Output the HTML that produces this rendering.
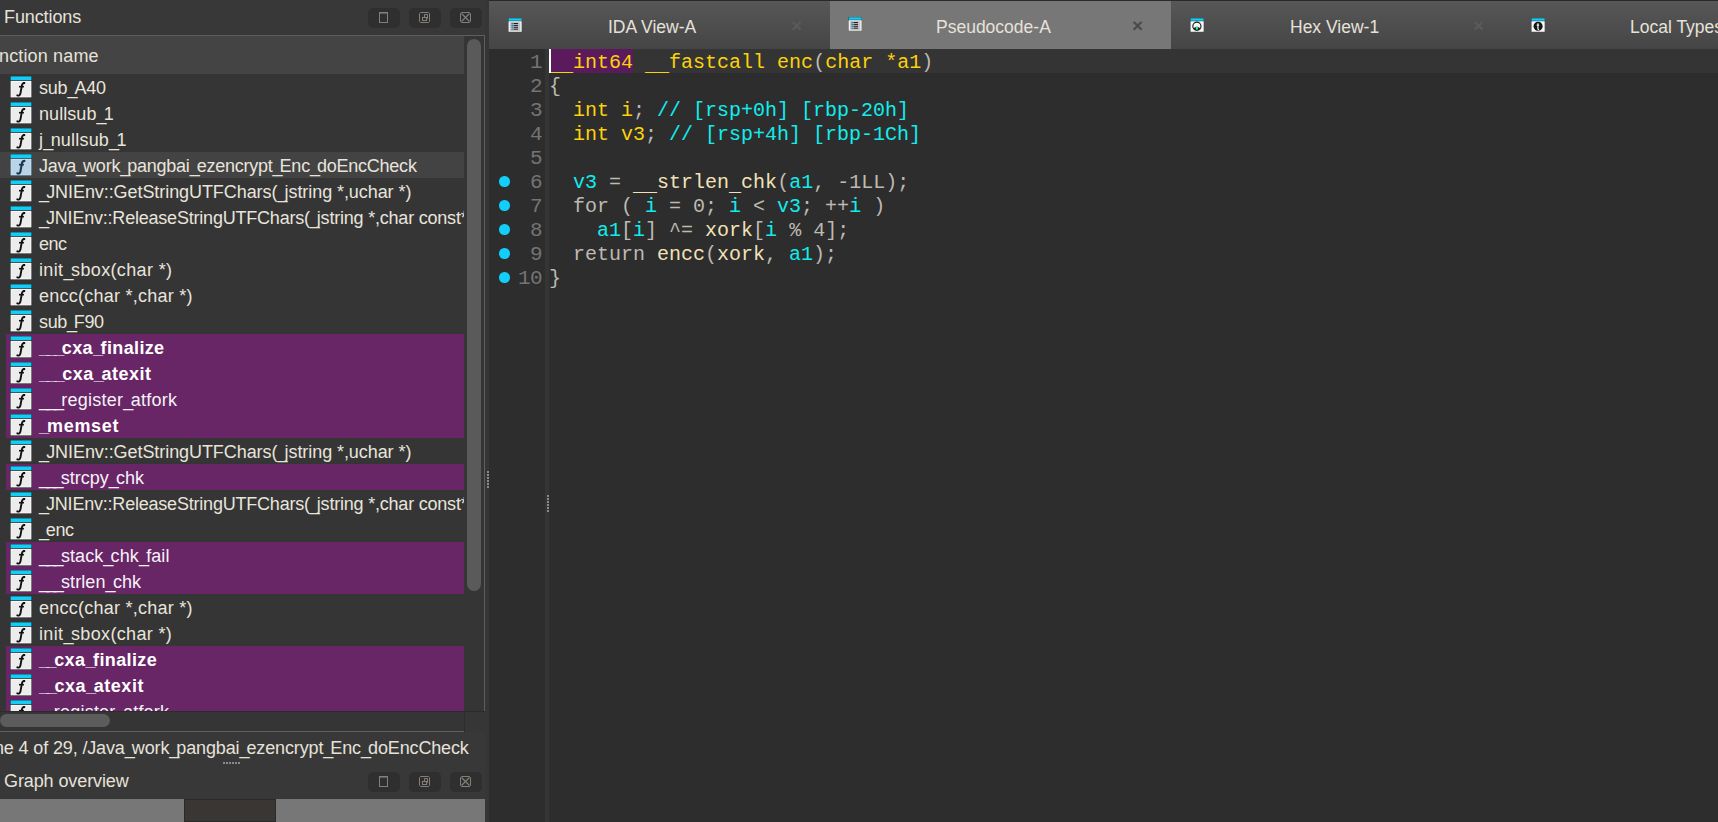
<!DOCTYPE html>
<html><head><meta charset="utf-8">
<style>
*{margin:0;padding:0;box-sizing:border-box}
html,body{width:1718px;height:822px;overflow:hidden;background:#2b2b2b;font-family:"Liberation Sans",sans-serif;color:#e8e4dc;position:relative}
.abs{position:absolute}
svg{display:block}
#left{position:absolute;left:0;top:0;width:489px;height:822px;background:#383838}
.title{position:absolute;left:4px;font-size:18px;letter-spacing:-0.1px;margin-top:1px;color:#e6e2da;white-space:nowrap}
.btn{position:absolute;width:32px;height:20px;border-radius:5px;background:#2f2f2f}
#list{position:absolute;left:0;top:35px;width:485px;height:697px;border-top:1px solid #5e5e5e;background:#353535;overflow:hidden}
#hdr{position:absolute;left:0;top:0;width:464px;height:38px;background:#444}
#hdr span{position:absolute;left:-1px;top:10px;font-size:18px;letter-spacing:0.15px;white-space:nowrap;color:#e6e2da}
#rows{position:absolute;left:0;top:38px;width:464px;height:637px;overflow:hidden;background:#353535}
.row{position:absolute;left:0;width:464px;height:26px;white-space:nowrap;font-size:18px}
.row.sel{background:#434343}
.row.pur{background:#682667;color:#f6f2f8}
.ic{position:absolute;left:10px;top:2px;width:22px;height:22px}
.tx{position:absolute;left:39px;top:4px}
.row.pur::before{content:"";position:absolute;left:0;top:0;width:6px;height:26px;background:#353535}
.tx.b{font-weight:bold;color:#fff}
#vscroll{position:absolute;left:464px;top:0;width:20px;height:675px;background:#353535}
#thumb{position:absolute;left:3px;top:3px;width:14px;height:552px;border-radius:7px;background:#5a5a5a}
#hscroll{position:absolute;left:0;top:675px;width:464px;height:21px;background:#353535;border-top:1px solid #2c2c2c;border-bottom:1px solid #5e5e5e}
#hthumb{position:absolute;left:0;top:2px;width:110px;height:13px;border-radius:6.5px;background:#5c5c5c}
#corner{position:absolute;left:464px;top:675px;width:21px;height:21px;background:#363636;border-top:1px solid #2c2c2c;border-left:1px solid #2c2c2c}
#status{position:absolute;left:-6px;top:738px;font-size:18px;--ls:-0.14px;letter-spacing:var(--ls);white-space:nowrap;color:#e6e2da}
#graph{position:absolute;left:0;top:799px;width:485px;height:23px;background:#777}
#graphrect{position:absolute;left:184px;top:0;width:92px;height:23px;background:#3a3634;border:1px solid #2a2a2a}
.dots6{position:absolute;width:18px;height:2px;background:repeating-linear-gradient(90deg,#8a8a8a 0 2px,transparent 2px 3px)}
.vdots{position:absolute;width:2px;height:17px;background:repeating-linear-gradient(180deg,#8a8a8a 0 2px,transparent 2px 3px)}
#lsplit{position:absolute;left:485px;top:0;width:4px;height:822px;background:#363636}
/* right */
#right{position:absolute;left:489px;top:0;width:1229px;height:822px;background:#2d2d2d}
#tabs{position:absolute;left:489px;top:0;width:1229px;height:49px;background:linear-gradient(#575757,#454545);border-top:1px solid #2a2a2a;overflow:hidden}
.tab{position:absolute;top:0;height:48px;white-space:nowrap}
.tab .tt{position:absolute;top:16px;font-size:17.5px;color:#e6e2da}
.tab .x{position:absolute;top:14px;font-size:19px;font-weight:bold;color:#5a5a5a}
.tab.act{background:#777}
.tab.act .x{color:#4a4a4a}
#gut{position:absolute;left:489px;top:49px;width:56px;height:773px;background:#2d2d2d}
#gutline{position:absolute;left:545px;top:49px;width:4px;height:773px;background:#353535}
#curline{position:absolute;left:549px;top:49px;width:1169px;height:24px;background:#343434}
.cl{position:absolute;left:549px;margin-top:2px;height:24px;font-family:"Liberation Mono",monospace;font-size:20px;line-height:24px;white-space:pre}
.ln{position:absolute;left:489px;width:53px;margin-top:2px;text-align:right;font-family:"Liberation Mono",monospace;font-size:21px;letter-spacing:-0.6px;line-height:24px;color:#747474}
.dot{position:absolute;left:499px;width:10.5px;height:10.5px;border-radius:50%;background:#12cefa}
.y{color:#fcd20a}
.c{color:#12ecec}
.g{color:#bdbab2}
.f{color:#f2e2b8}
.hl{}
#hlbox{position:absolute;left:549px;top:49px;width:84px;height:24px;background:#5a1a5c}
#cursor{position:absolute;left:549px;top:49px;width:2px;height:24px;background:#fff}
.tx{letter-spacing:var(--ls)}
.u{font-style:normal;position:relative;top:0px;letter-spacing:calc(var(--ls) - 2.8px)}
.uc{position:relative;top:3px}
#rborder{position:absolute;left:484px;top:35px;width:1px;height:676px;background:#5e5e5e}
</style></head><body>
<div id="left">
<div class="title" style="top:6px">Functions</div>
<div class="btn" style="left:368px;top:8px"><svg width="32" height="20" viewBox="0 0 32 20"><rect x="11.5" y="4.5" width="8" height="10" fill="none" stroke="#837e78" stroke-width="1"/><rect x="11" y="4" width="9" height="1.6" fill="#837e78"/></svg></div><div class="btn" style="left:409px;top:8px"><svg width="32" height="20" viewBox="0 0 32 20"><path d="M11.5 4.5 H19.5 L20.5 5.5 V13.5 L19.5 14.5 H11.5 L10.5 13.5 V5.5Z" fill="none" stroke="#837e78" stroke-width="1"/><rect x="13.5" y="9.5" width="4" height="3" fill="none" stroke="#837e78" stroke-width="1"/><path d="M15.5 9.5 V6.5 H18.5 V10.5 H17.5" fill="none" stroke="#837e78" stroke-width="1"/></svg></div><div class="btn" style="left:450px;top:8px"><svg width="32" height="20" viewBox="0 0 32 20"><path d="M11.5 4.5 H19.5 L20.5 5.5 V13.5 L19.5 14.5 H11.5 L10.5 13.5 V5.5Z" fill="none" stroke="#837e78" stroke-width="1"/><path d="M11.5 5.5 L19.5 13.5 M19.5 5.5 L11.5 13.5" stroke="#837e78" stroke-width="1.2"/></svg></div>
<div id="list"><div id="hdr"><span>nction name</span></div><div id="rows">
<div class="row " style="top:0px"><svg class="ic" viewBox="0 0 22 22">
<rect x="0" y="0" width="22" height="22" rx="1" fill="#262626"/>
<rect x="0.6" y="0.4" width="20.8" height="3.8" fill="#12cdf6"/>
<rect x="0.6" y="4.9" width="20.8" height="16.5" fill="#fafafa"/>
<rect x="1.5" y="5.8" width="19" height="14.7" fill="#ececec"/>
<path d="M7.3 19.3 C8.8 20 10 19.5 10.4 17.5 L11.9 9.6 C12.2 7.6 13 6.9 14.4 6.9" fill="none" stroke="#111" stroke-width="1.9" stroke-linecap="round"/>
<circle cx="14" cy="7.1" r="1.15" fill="#111"/>
<path d="M9 10.7 L13.9 10.7" stroke="#111" stroke-width="1.6"/>
</svg><span class="tx" style="--ls:-0.21px">sub<i class="u">_</i>A40</span></div>
<div class="row " style="top:26px"><svg class="ic" viewBox="0 0 22 22">
<rect x="0" y="0" width="22" height="22" rx="1" fill="#262626"/>
<rect x="0.6" y="0.4" width="20.8" height="3.8" fill="#12cdf6"/>
<rect x="0.6" y="4.9" width="20.8" height="16.5" fill="#fafafa"/>
<rect x="1.5" y="5.8" width="19" height="14.7" fill="#ececec"/>
<path d="M7.3 19.3 C8.8 20 10 19.5 10.4 17.5 L11.9 9.6 C12.2 7.6 13 6.9 14.4 6.9" fill="none" stroke="#111" stroke-width="1.9" stroke-linecap="round"/>
<circle cx="14" cy="7.1" r="1.15" fill="#111"/>
<path d="M9 10.7 L13.9 10.7" stroke="#111" stroke-width="1.6"/>
</svg><span class="tx" style="--ls:0.07px">nullsub<i class="u">_</i>1</span></div>
<div class="row " style="top:52px"><svg class="ic" viewBox="0 0 22 22">
<rect x="0" y="0" width="22" height="22" rx="1" fill="#262626"/>
<rect x="0.6" y="0.4" width="20.8" height="3.8" fill="#12cdf6"/>
<rect x="0.6" y="4.9" width="20.8" height="16.5" fill="#fafafa"/>
<rect x="1.5" y="5.8" width="19" height="14.7" fill="#ececec"/>
<path d="M7.3 19.3 C8.8 20 10 19.5 10.4 17.5 L11.9 9.6 C12.2 7.6 13 6.9 14.4 6.9" fill="none" stroke="#111" stroke-width="1.9" stroke-linecap="round"/>
<circle cx="14" cy="7.1" r="1.15" fill="#111"/>
<path d="M9 10.7 L13.9 10.7" stroke="#111" stroke-width="1.6"/>
</svg><span class="tx" style="--ls:0.20px">j<i class="u">_</i>nullsub<i class="u">_</i>1</span></div>
<div class="row sel" style="top:78px"><svg class="ic" viewBox="0 0 22 22">
<rect x="0" y="0" width="22" height="22" rx="1" fill="#2a3a48"/>
<rect x="0.6" y="0.4" width="20.8" height="3.8" fill="#12cdf6"/>
<rect x="0.6" y="4.9" width="20.8" height="16.5" fill="#c9e1ef"/>
<rect x="1.5" y="5.8" width="19" height="14.7" fill="#b8d4e6"/>
<path d="M7.3 19.3 C8.8 20 10 19.5 10.4 17.5 L11.9 9.6 C12.2 7.6 13 6.9 14.4 6.9" fill="none" stroke="#1c3850" stroke-width="2.1" stroke-linecap="round"/>
<circle cx="14" cy="7.1" r="1.15" fill="#1c3850"/>
<path d="M9 10.7 L13.9 10.7" stroke="#1c3850" stroke-width="1.7"/>
</svg><span class="tx" style="--ls:-0.23px">Java<i class="u">_</i>work<i class="u">_</i>pangbai<i class="u">_</i>ezencrypt<i class="u">_</i>Enc<i class="u">_</i>doEncCheck</span></div>
<div class="row " style="top:104px"><svg class="ic" viewBox="0 0 22 22">
<rect x="0" y="0" width="22" height="22" rx="1" fill="#262626"/>
<rect x="0.6" y="0.4" width="20.8" height="3.8" fill="#12cdf6"/>
<rect x="0.6" y="4.9" width="20.8" height="16.5" fill="#fafafa"/>
<rect x="1.5" y="5.8" width="19" height="14.7" fill="#ececec"/>
<path d="M7.3 19.3 C8.8 20 10 19.5 10.4 17.5 L11.9 9.6 C12.2 7.6 13 6.9 14.4 6.9" fill="none" stroke="#111" stroke-width="1.9" stroke-linecap="round"/>
<circle cx="14" cy="7.1" r="1.15" fill="#111"/>
<path d="M9 10.7 L13.9 10.7" stroke="#111" stroke-width="1.6"/>
</svg><span class="tx" style="--ls:-0.07px"><i class="u">_</i>JNIEnv::GetStringUTFChars(<i class="u">_</i>jstring *,uchar *)</span></div>
<div class="row " style="top:130px"><svg class="ic" viewBox="0 0 22 22">
<rect x="0" y="0" width="22" height="22" rx="1" fill="#262626"/>
<rect x="0.6" y="0.4" width="20.8" height="3.8" fill="#12cdf6"/>
<rect x="0.6" y="4.9" width="20.8" height="16.5" fill="#fafafa"/>
<rect x="1.5" y="5.8" width="19" height="14.7" fill="#ececec"/>
<path d="M7.3 19.3 C8.8 20 10 19.5 10.4 17.5 L11.9 9.6 C12.2 7.6 13 6.9 14.4 6.9" fill="none" stroke="#111" stroke-width="1.9" stroke-linecap="round"/>
<circle cx="14" cy="7.1" r="1.15" fill="#111"/>
<path d="M9 10.7 L13.9 10.7" stroke="#111" stroke-width="1.6"/>
</svg><span class="tx" style="--ls:-0.21px"><i class="u">_</i>JNIEnv::ReleaseStringUTFChars(<i class="u">_</i>jstring *,char const*)</span></div>
<div class="row " style="top:156px"><svg class="ic" viewBox="0 0 22 22">
<rect x="0" y="0" width="22" height="22" rx="1" fill="#262626"/>
<rect x="0.6" y="0.4" width="20.8" height="3.8" fill="#12cdf6"/>
<rect x="0.6" y="4.9" width="20.8" height="16.5" fill="#fafafa"/>
<rect x="1.5" y="5.8" width="19" height="14.7" fill="#ececec"/>
<path d="M7.3 19.3 C8.8 20 10 19.5 10.4 17.5 L11.9 9.6 C12.2 7.6 13 6.9 14.4 6.9" fill="none" stroke="#111" stroke-width="1.9" stroke-linecap="round"/>
<circle cx="14" cy="7.1" r="1.15" fill="#111"/>
<path d="M9 10.7 L13.9 10.7" stroke="#111" stroke-width="1.6"/>
</svg><span class="tx" style="--ls:-0.51px">enc</span></div>
<div class="row " style="top:182px"><svg class="ic" viewBox="0 0 22 22">
<rect x="0" y="0" width="22" height="22" rx="1" fill="#262626"/>
<rect x="0.6" y="0.4" width="20.8" height="3.8" fill="#12cdf6"/>
<rect x="0.6" y="4.9" width="20.8" height="16.5" fill="#fafafa"/>
<rect x="1.5" y="5.8" width="19" height="14.7" fill="#ececec"/>
<path d="M7.3 19.3 C8.8 20 10 19.5 10.4 17.5 L11.9 9.6 C12.2 7.6 13 6.9 14.4 6.9" fill="none" stroke="#111" stroke-width="1.9" stroke-linecap="round"/>
<circle cx="14" cy="7.1" r="1.15" fill="#111"/>
<path d="M9 10.7 L13.9 10.7" stroke="#111" stroke-width="1.6"/>
</svg><span class="tx" style="--ls:0.36px">init<i class="u">_</i>sbox(char *)</span></div>
<div class="row " style="top:208px"><svg class="ic" viewBox="0 0 22 22">
<rect x="0" y="0" width="22" height="22" rx="1" fill="#262626"/>
<rect x="0.6" y="0.4" width="20.8" height="3.8" fill="#12cdf6"/>
<rect x="0.6" y="4.9" width="20.8" height="16.5" fill="#fafafa"/>
<rect x="1.5" y="5.8" width="19" height="14.7" fill="#ececec"/>
<path d="M7.3 19.3 C8.8 20 10 19.5 10.4 17.5 L11.9 9.6 C12.2 7.6 13 6.9 14.4 6.9" fill="none" stroke="#111" stroke-width="1.9" stroke-linecap="round"/>
<circle cx="14" cy="7.1" r="1.15" fill="#111"/>
<path d="M9 10.7 L13.9 10.7" stroke="#111" stroke-width="1.6"/>
</svg><span class="tx" style="--ls:0.25px">encc(char *,char *)</span></div>
<div class="row " style="top:234px"><svg class="ic" viewBox="0 0 22 22">
<rect x="0" y="0" width="22" height="22" rx="1" fill="#262626"/>
<rect x="0.6" y="0.4" width="20.8" height="3.8" fill="#12cdf6"/>
<rect x="0.6" y="4.9" width="20.8" height="16.5" fill="#fafafa"/>
<rect x="1.5" y="5.8" width="19" height="14.7" fill="#ececec"/>
<path d="M7.3 19.3 C8.8 20 10 19.5 10.4 17.5 L11.9 9.6 C12.2 7.6 13 6.9 14.4 6.9" fill="none" stroke="#111" stroke-width="1.9" stroke-linecap="round"/>
<circle cx="14" cy="7.1" r="1.15" fill="#111"/>
<path d="M9 10.7 L13.9 10.7" stroke="#111" stroke-width="1.6"/>
</svg><span class="tx" style="--ls:-0.37px">sub<i class="u">_</i>F90</span></div>
<div class="row pur" style="top:260px"><svg class="ic" viewBox="0 0 22 22">
<rect x="0" y="0" width="22" height="22" rx="1" fill="#262626"/>
<rect x="0.6" y="0.4" width="20.8" height="3.8" fill="#12cdf6"/>
<rect x="0.6" y="4.9" width="20.8" height="16.5" fill="#fafafa"/>
<rect x="1.5" y="5.8" width="19" height="14.7" fill="#ececec"/>
<path d="M7.3 19.3 C8.8 20 10 19.5 10.4 17.5 L11.9 9.6 C12.2 7.6 13 6.9 14.4 6.9" fill="none" stroke="#111" stroke-width="1.9" stroke-linecap="round"/>
<circle cx="14" cy="7.1" r="1.15" fill="#111"/>
<path d="M9 10.7 L13.9 10.7" stroke="#111" stroke-width="1.6"/>
</svg><span class="tx b" style="--ls:0.37px"><i class="u">_</i><i class="u">_</i><i class="u">_</i>cxa<i class="u">_</i>finalize</span></div>
<div class="row pur" style="top:286px"><svg class="ic" viewBox="0 0 22 22">
<rect x="0" y="0" width="22" height="22" rx="1" fill="#262626"/>
<rect x="0.6" y="0.4" width="20.8" height="3.8" fill="#12cdf6"/>
<rect x="0.6" y="4.9" width="20.8" height="16.5" fill="#fafafa"/>
<rect x="1.5" y="5.8" width="19" height="14.7" fill="#ececec"/>
<path d="M7.3 19.3 C8.8 20 10 19.5 10.4 17.5 L11.9 9.6 C12.2 7.6 13 6.9 14.4 6.9" fill="none" stroke="#111" stroke-width="1.9" stroke-linecap="round"/>
<circle cx="14" cy="7.1" r="1.15" fill="#111"/>
<path d="M9 10.7 L13.9 10.7" stroke="#111" stroke-width="1.6"/>
</svg><span class="tx b" style="--ls:0.51px"><i class="u">_</i><i class="u">_</i><i class="u">_</i>cxa<i class="u">_</i>atexit</span></div>
<div class="row pur" style="top:312px"><svg class="ic" viewBox="0 0 22 22">
<rect x="0" y="0" width="22" height="22" rx="1" fill="#262626"/>
<rect x="0.6" y="0.4" width="20.8" height="3.8" fill="#12cdf6"/>
<rect x="0.6" y="4.9" width="20.8" height="16.5" fill="#fafafa"/>
<rect x="1.5" y="5.8" width="19" height="14.7" fill="#ececec"/>
<path d="M7.3 19.3 C8.8 20 10 19.5 10.4 17.5 L11.9 9.6 C12.2 7.6 13 6.9 14.4 6.9" fill="none" stroke="#111" stroke-width="1.9" stroke-linecap="round"/>
<circle cx="14" cy="7.1" r="1.15" fill="#111"/>
<path d="M9 10.7 L13.9 10.7" stroke="#111" stroke-width="1.6"/>
</svg><span class="tx" style="--ls:0.24px"><i class="u">_</i><i class="u">_</i><i class="u">_</i>register<i class="u">_</i>atfork</span></div>
<div class="row pur" style="top:338px"><svg class="ic" viewBox="0 0 22 22">
<rect x="0" y="0" width="22" height="22" rx="1" fill="#262626"/>
<rect x="0.6" y="0.4" width="20.8" height="3.8" fill="#12cdf6"/>
<rect x="0.6" y="4.9" width="20.8" height="16.5" fill="#fafafa"/>
<rect x="1.5" y="5.8" width="19" height="14.7" fill="#ececec"/>
<path d="M7.3 19.3 C8.8 20 10 19.5 10.4 17.5 L11.9 9.6 C12.2 7.6 13 6.9 14.4 6.9" fill="none" stroke="#111" stroke-width="1.9" stroke-linecap="round"/>
<circle cx="14" cy="7.1" r="1.15" fill="#111"/>
<path d="M9 10.7 L13.9 10.7" stroke="#111" stroke-width="1.6"/>
</svg><span class="tx b" style="--ls:0.72px"><i class="u">_</i>memset</span></div>
<div class="row " style="top:364px"><svg class="ic" viewBox="0 0 22 22">
<rect x="0" y="0" width="22" height="22" rx="1" fill="#262626"/>
<rect x="0.6" y="0.4" width="20.8" height="3.8" fill="#12cdf6"/>
<rect x="0.6" y="4.9" width="20.8" height="16.5" fill="#fafafa"/>
<rect x="1.5" y="5.8" width="19" height="14.7" fill="#ececec"/>
<path d="M7.3 19.3 C8.8 20 10 19.5 10.4 17.5 L11.9 9.6 C12.2 7.6 13 6.9 14.4 6.9" fill="none" stroke="#111" stroke-width="1.9" stroke-linecap="round"/>
<circle cx="14" cy="7.1" r="1.15" fill="#111"/>
<path d="M9 10.7 L13.9 10.7" stroke="#111" stroke-width="1.6"/>
</svg><span class="tx" style="--ls:-0.07px"><i class="u">_</i>JNIEnv::GetStringUTFChars(<i class="u">_</i>jstring *,uchar *)</span></div>
<div class="row pur" style="top:390px"><svg class="ic" viewBox="0 0 22 22">
<rect x="0" y="0" width="22" height="22" rx="1" fill="#262626"/>
<rect x="0.6" y="0.4" width="20.8" height="3.8" fill="#12cdf6"/>
<rect x="0.6" y="4.9" width="20.8" height="16.5" fill="#fafafa"/>
<rect x="1.5" y="5.8" width="19" height="14.7" fill="#ececec"/>
<path d="M7.3 19.3 C8.8 20 10 19.5 10.4 17.5 L11.9 9.6 C12.2 7.6 13 6.9 14.4 6.9" fill="none" stroke="#111" stroke-width="1.9" stroke-linecap="round"/>
<circle cx="14" cy="7.1" r="1.15" fill="#111"/>
<path d="M9 10.7 L13.9 10.7" stroke="#111" stroke-width="1.6"/>
</svg><span class="tx" style="--ls:0.01px"><i class="u">_</i><i class="u">_</i><i class="u">_</i>strcpy<i class="u">_</i>chk</span></div>
<div class="row " style="top:416px"><svg class="ic" viewBox="0 0 22 22">
<rect x="0" y="0" width="22" height="22" rx="1" fill="#262626"/>
<rect x="0.6" y="0.4" width="20.8" height="3.8" fill="#12cdf6"/>
<rect x="0.6" y="4.9" width="20.8" height="16.5" fill="#fafafa"/>
<rect x="1.5" y="5.8" width="19" height="14.7" fill="#ececec"/>
<path d="M7.3 19.3 C8.8 20 10 19.5 10.4 17.5 L11.9 9.6 C12.2 7.6 13 6.9 14.4 6.9" fill="none" stroke="#111" stroke-width="1.9" stroke-linecap="round"/>
<circle cx="14" cy="7.1" r="1.15" fill="#111"/>
<path d="M9 10.7 L13.9 10.7" stroke="#111" stroke-width="1.6"/>
</svg><span class="tx" style="--ls:-0.21px"><i class="u">_</i>JNIEnv::ReleaseStringUTFChars(<i class="u">_</i>jstring *,char const*)</span></div>
<div class="row " style="top:442px"><svg class="ic" viewBox="0 0 22 22">
<rect x="0" y="0" width="22" height="22" rx="1" fill="#262626"/>
<rect x="0.6" y="0.4" width="20.8" height="3.8" fill="#12cdf6"/>
<rect x="0.6" y="4.9" width="20.8" height="16.5" fill="#fafafa"/>
<rect x="1.5" y="5.8" width="19" height="14.7" fill="#ececec"/>
<path d="M7.3 19.3 C8.8 20 10 19.5 10.4 17.5 L11.9 9.6 C12.2 7.6 13 6.9 14.4 6.9" fill="none" stroke="#111" stroke-width="1.9" stroke-linecap="round"/>
<circle cx="14" cy="7.1" r="1.15" fill="#111"/>
<path d="M9 10.7 L13.9 10.7" stroke="#111" stroke-width="1.6"/>
</svg><span class="tx" style="--ls:-0.41px"><i class="u">_</i>enc</span></div>
<div class="row pur" style="top:468px"><svg class="ic" viewBox="0 0 22 22">
<rect x="0" y="0" width="22" height="22" rx="1" fill="#262626"/>
<rect x="0.6" y="0.4" width="20.8" height="3.8" fill="#12cdf6"/>
<rect x="0.6" y="4.9" width="20.8" height="16.5" fill="#fafafa"/>
<rect x="1.5" y="5.8" width="19" height="14.7" fill="#ececec"/>
<path d="M7.3 19.3 C8.8 20 10 19.5 10.4 17.5 L11.9 9.6 C12.2 7.6 13 6.9 14.4 6.9" fill="none" stroke="#111" stroke-width="1.9" stroke-linecap="round"/>
<circle cx="14" cy="7.1" r="1.15" fill="#111"/>
<path d="M9 10.7 L13.9 10.7" stroke="#111" stroke-width="1.6"/>
</svg><span class="tx" style="--ls:0.08px"><i class="u">_</i><i class="u">_</i><i class="u">_</i>stack<i class="u">_</i>chk<i class="u">_</i>fail</span></div>
<div class="row pur" style="top:494px"><svg class="ic" viewBox="0 0 22 22">
<rect x="0" y="0" width="22" height="22" rx="1" fill="#262626"/>
<rect x="0.6" y="0.4" width="20.8" height="3.8" fill="#12cdf6"/>
<rect x="0.6" y="4.9" width="20.8" height="16.5" fill="#fafafa"/>
<rect x="1.5" y="5.8" width="19" height="14.7" fill="#ececec"/>
<path d="M7.3 19.3 C8.8 20 10 19.5 10.4 17.5 L11.9 9.6 C12.2 7.6 13 6.9 14.4 6.9" fill="none" stroke="#111" stroke-width="1.9" stroke-linecap="round"/>
<circle cx="14" cy="7.1" r="1.15" fill="#111"/>
<path d="M9 10.7 L13.9 10.7" stroke="#111" stroke-width="1.6"/>
</svg><span class="tx" style="--ls:0.10px"><i class="u">_</i><i class="u">_</i><i class="u">_</i>strlen<i class="u">_</i>chk</span></div>
<div class="row " style="top:520px"><svg class="ic" viewBox="0 0 22 22">
<rect x="0" y="0" width="22" height="22" rx="1" fill="#262626"/>
<rect x="0.6" y="0.4" width="20.8" height="3.8" fill="#12cdf6"/>
<rect x="0.6" y="4.9" width="20.8" height="16.5" fill="#fafafa"/>
<rect x="1.5" y="5.8" width="19" height="14.7" fill="#ececec"/>
<path d="M7.3 19.3 C8.8 20 10 19.5 10.4 17.5 L11.9 9.6 C12.2 7.6 13 6.9 14.4 6.9" fill="none" stroke="#111" stroke-width="1.9" stroke-linecap="round"/>
<circle cx="14" cy="7.1" r="1.15" fill="#111"/>
<path d="M9 10.7 L13.9 10.7" stroke="#111" stroke-width="1.6"/>
</svg><span class="tx" style="--ls:0.24px">encc(char *,char *)</span></div>
<div class="row " style="top:546px"><svg class="ic" viewBox="0 0 22 22">
<rect x="0" y="0" width="22" height="22" rx="1" fill="#262626"/>
<rect x="0.6" y="0.4" width="20.8" height="3.8" fill="#12cdf6"/>
<rect x="0.6" y="4.9" width="20.8" height="16.5" fill="#fafafa"/>
<rect x="1.5" y="5.8" width="19" height="14.7" fill="#ececec"/>
<path d="M7.3 19.3 C8.8 20 10 19.5 10.4 17.5 L11.9 9.6 C12.2 7.6 13 6.9 14.4 6.9" fill="none" stroke="#111" stroke-width="1.9" stroke-linecap="round"/>
<circle cx="14" cy="7.1" r="1.15" fill="#111"/>
<path d="M9 10.7 L13.9 10.7" stroke="#111" stroke-width="1.6"/>
</svg><span class="tx" style="--ls:0.35px">init<i class="u">_</i>sbox(char *)</span></div>
<div class="row pur" style="top:572px"><svg class="ic" viewBox="0 0 22 22">
<rect x="0" y="0" width="22" height="22" rx="1" fill="#262626"/>
<rect x="0.6" y="0.4" width="20.8" height="3.8" fill="#12cdf6"/>
<rect x="0.6" y="4.9" width="20.8" height="16.5" fill="#fafafa"/>
<rect x="1.5" y="5.8" width="19" height="14.7" fill="#ececec"/>
<path d="M7.3 19.3 C8.8 20 10 19.5 10.4 17.5 L11.9 9.6 C12.2 7.6 13 6.9 14.4 6.9" fill="none" stroke="#111" stroke-width="1.9" stroke-linecap="round"/>
<circle cx="14" cy="7.1" r="1.15" fill="#111"/>
<path d="M9 10.7 L13.9 10.7" stroke="#111" stroke-width="1.6"/>
</svg><span class="tx b" style="--ls:0.39px"><i class="u">_</i><i class="u">_</i>cxa<i class="u">_</i>finalize</span></div>
<div class="row pur" style="top:598px"><svg class="ic" viewBox="0 0 22 22">
<rect x="0" y="0" width="22" height="22" rx="1" fill="#262626"/>
<rect x="0.6" y="0.4" width="20.8" height="3.8" fill="#12cdf6"/>
<rect x="0.6" y="4.9" width="20.8" height="16.5" fill="#fafafa"/>
<rect x="1.5" y="5.8" width="19" height="14.7" fill="#ececec"/>
<path d="M7.3 19.3 C8.8 20 10 19.5 10.4 17.5 L11.9 9.6 C12.2 7.6 13 6.9 14.4 6.9" fill="none" stroke="#111" stroke-width="1.9" stroke-linecap="round"/>
<circle cx="14" cy="7.1" r="1.15" fill="#111"/>
<path d="M9 10.7 L13.9 10.7" stroke="#111" stroke-width="1.6"/>
</svg><span class="tx b" style="--ls:0.52px"><i class="u">_</i><i class="u">_</i>cxa<i class="u">_</i>atexit</span></div>
<div class="row pur" style="top:624px"><svg class="ic" viewBox="0 0 22 22">
<rect x="0" y="0" width="22" height="22" rx="1" fill="#262626"/>
<rect x="0.6" y="0.4" width="20.8" height="3.8" fill="#12cdf6"/>
<rect x="0.6" y="4.9" width="20.8" height="16.5" fill="#fafafa"/>
<rect x="1.5" y="5.8" width="19" height="14.7" fill="#ececec"/>
<path d="M7.3 19.3 C8.8 20 10 19.5 10.4 17.5 L11.9 9.6 C12.2 7.6 13 6.9 14.4 6.9" fill="none" stroke="#111" stroke-width="1.9" stroke-linecap="round"/>
<circle cx="14" cy="7.1" r="1.15" fill="#111"/>
<path d="M9 10.7 L13.9 10.7" stroke="#111" stroke-width="1.6"/>
</svg><span class="tx" style="--ls:0.21px"><i class="u">_</i><i class="u">_</i>register<i class="u">_</i>atfork</span></div>
</div><div id="vscroll"><div id="thumb"></div></div><div id="hscroll"><div id="hthumb"></div></div><div id="corner"></div></div><div id="rborder"></div>
<div id="status">ne 4 of 29, /Java<i class="u">_</i>work<i class="u">_</i>pangbai<i class="u">_</i>ezencrypt<i class="u">_</i>Enc<i class="u">_</i>doEncCheck</div>
<div class="dots6" style="left:223px;top:762px"></div>
<div class="title" style="top:770px">Graph overview</div>
<div class="btn" style="left:368px;top:772px"><svg width="32" height="20" viewBox="0 0 32 20"><rect x="11.5" y="4.5" width="8" height="10" fill="none" stroke="#837e78" stroke-width="1"/><rect x="11" y="4" width="9" height="1.6" fill="#837e78"/></svg></div><div class="btn" style="left:409px;top:772px"><svg width="32" height="20" viewBox="0 0 32 20"><path d="M11.5 4.5 H19.5 L20.5 5.5 V13.5 L19.5 14.5 H11.5 L10.5 13.5 V5.5Z" fill="none" stroke="#837e78" stroke-width="1"/><rect x="13.5" y="9.5" width="4" height="3" fill="none" stroke="#837e78" stroke-width="1"/><path d="M15.5 9.5 V6.5 H18.5 V10.5 H17.5" fill="none" stroke="#837e78" stroke-width="1"/></svg></div><div class="btn" style="left:450px;top:772px"><svg width="32" height="20" viewBox="0 0 32 20"><path d="M11.5 4.5 H19.5 L20.5 5.5 V13.5 L19.5 14.5 H11.5 L10.5 13.5 V5.5Z" fill="none" stroke="#837e78" stroke-width="1"/><path d="M11.5 5.5 L19.5 13.5 M19.5 5.5 L11.5 13.5" stroke="#837e78" stroke-width="1.2"/></svg></div>
<div id="graph"><div id="graphrect"></div></div>
<div id="lsplit"></div><div class="vdots" style="left:487px;top:471px"></div>
</div>
<div id="right"></div>
<div id="tabs">
<div class="tab " style="left:0px;width:341px"><div class="abs" style="left:19px;top:17px;width:15px;height:15px"><svg width="14.2" height="14.2" viewBox="0 0 15 15"><rect x="0" y="0" width="15" height="15" fill="#2a2a2a"/><rect x="0.5" y="0.3" width="14" height="2.6" fill="#12cdf6"/><rect x="0.5" y="3.4" width="14" height="11.2" fill="#f6f6f6"/><rect x="2" y="4.4" width="11" height="9.4" fill="#c4c4c4"/><circle cx="4.4" cy="5.8" r="0.8" fill="#0a7ac0"/><circle cx="4.4" cy="7.8" r="0.8" fill="#0a7ac0"/><circle cx="4.4" cy="9.8" r="0.8" fill="#0a7ac0"/><circle cx="4.4" cy="11.8" r="0.8" fill="#0a7ac0"/><path d="M5.8 5.8H10.6M5.8 7.8H10.6M5.8 9.8H10.6M5.8 11.8H10.6" stroke="#111" stroke-width="1"/></svg></div><span class="tt" style="left:119px">IDA View-A</span><span class="x" style="left:302px">×</span></div>
<div class="tab act" style="left:341px;width:341px"><div class="abs" style="left:18px;top:16px;width:15px;height:15px"><svg width="14.2" height="14.2" viewBox="0 0 15 15"><rect x="0" y="0" width="15" height="15" fill="#2a2a2a"/><rect x="0.5" y="0.3" width="14" height="2.6" fill="#12cdf6"/><rect x="0.5" y="3.4" width="14" height="11.2" fill="#f6f6f6"/><rect x="2" y="4.4" width="11" height="9.4" fill="#c4c4c4"/><circle cx="4.4" cy="5.8" r="0.8" fill="#0a7ac0"/><circle cx="4.4" cy="7.8" r="0.8" fill="#0a7ac0"/><circle cx="4.4" cy="9.8" r="0.8" fill="#0a7ac0"/><circle cx="4.4" cy="11.8" r="0.8" fill="#0a7ac0"/><path d="M5.8 5.8H10.6M5.8 7.8H10.6M5.8 9.8H10.6M5.8 11.8H10.6" stroke="#111" stroke-width="1"/></svg></div><span class="tt" style="left:106px">Pseudocode-A</span><span class="x" style="left:302px">×</span></div>
<div class="tab " style="left:682px;width:341px"><div class="abs" style="left:19px;top:17px;width:15px;height:15px"><svg width="14.2" height="14.2" viewBox="0 0 15 15"><rect x="0" y="0" width="15" height="15" fill="#2a2a2a"/><rect x="0.5" y="0.3" width="14" height="2.6" fill="#12cdf6"/><rect x="0.5" y="3.4" width="14" height="11.2" fill="#f8f8f8"/><circle cx="7.3" cy="8.7" r="4.3" fill="none" stroke="#1a1a1a" stroke-width="1.2"/><path d="M3.6 10.8 Q7.3 7.6 11 10.8 L9.5 12.6 Q7.3 13.6 5.1 12.6Z" fill="#1a1a1a"/><path d="M7.3 8.3 L8.7 10.4 Q8.8 12.6 7.3 12.8 Q5.8 12.6 5.9 10.4Z" fill="#2ee88a"/></svg></div><span class="tt" style="left:119px">Hex View-1</span><span class="x" style="left:302px">×</span></div>
<div class="tab " style="left:1023px;width:348px"><div class="abs" style="left:19px;top:17px;width:15px;height:15px"><svg width="14.2" height="14.2" viewBox="0 0 15 15"><rect x="0" y="0" width="15" height="15" fill="#2a2a2a"/><rect x="0.5" y="0.3" width="14" height="2.6" fill="#12cdf6"/><rect x="0.5" y="3.4" width="14" height="11.2" fill="#f8f8f8"/><circle cx="7.5" cy="8.7" r="4.8" fill="#151515"/><path d="M7.3 5.6 V11 Q7.3 12.3 8.6 12.2 M6 7.6 H8.6" fill="none" stroke="#f0f0f0" stroke-width="1.3"/></svg></div><span class="tt" style="left:118px">Local Types</span><span class="x" style="left:302px">×</span></div>
</div>
<div id="gut"></div><div id="gutline"></div><div class="vdots" style="left:547px;top:495px"></div>
<div id="curline"></div><div id="hlbox"></div>
<div class="ln" style="top:49px">1</div><div class="cl" style="top:49px"><span class="y hl"><span class="uc">_</span><span class="uc">_</span>int64</span><span class="g"> </span><span class="y"><span class="uc">_</span><span class="uc">_</span>fastcall enc</span><span class="g">(</span><span class="y">char *a1</span><span class="g">)</span></div>
<div class="ln" style="top:73px">2</div><div class="cl" style="top:73px"><span class="g">{</span></div>
<div class="ln" style="top:97px">3</div><div class="cl" style="top:97px"><span class="g">  </span><span class="y">int i</span><span class="g">;</span><span class="c"> // [rsp+0h] [rbp-20h]</span></div>
<div class="ln" style="top:121px">4</div><div class="cl" style="top:121px"><span class="g">  </span><span class="y">int v3</span><span class="g">;</span><span class="c"> // [rsp+4h] [rbp-1Ch]</span></div>
<div class="ln" style="top:145px">5</div><div class="cl" style="top:145px"></div>
<div class="ln" style="top:169px">6</div><div class="dot" style="top:176px"></div><div class="cl" style="top:169px"><span class="g">  </span><span class="c">v3</span><span class="g"> = </span><span class="f"><span class="uc">_</span><span class="uc">_</span>strlen<span class="uc">_</span>chk</span><span class="g">(</span><span class="c">a1</span><span class="g">, -1LL);</span></div>
<div class="ln" style="top:193px">7</div><div class="dot" style="top:200px"></div><div class="cl" style="top:193px"><span class="g">  </span><span class="g">for ( </span><span class="c">i</span><span class="g"> = 0; </span><span class="c">i</span><span class="g"> &lt; </span><span class="c">v3</span><span class="g">; ++</span><span class="c">i</span><span class="g"> )</span></div>
<div class="ln" style="top:217px">8</div><div class="dot" style="top:224px"></div><div class="cl" style="top:217px"><span class="g">    </span><span class="c">a1</span><span class="g">[</span><span class="c">i</span><span class="g">] ^= </span><span class="f">xork</span><span class="g">[</span><span class="c">i</span><span class="g"> % 4];</span></div>
<div class="ln" style="top:241px">9</div><div class="dot" style="top:248px"></div><div class="cl" style="top:241px"><span class="g">  </span><span class="g">return </span><span class="f">encc</span><span class="g">(</span><span class="f">xork</span><span class="g">, </span><span class="c">a1</span><span class="g">);</span></div>
<div class="ln" style="top:265px">10</div><div class="dot" style="top:272px"></div><div class="cl" style="top:265px"><span class="g">}</span></div>
<div id="cursor"></div>
</body></html>
